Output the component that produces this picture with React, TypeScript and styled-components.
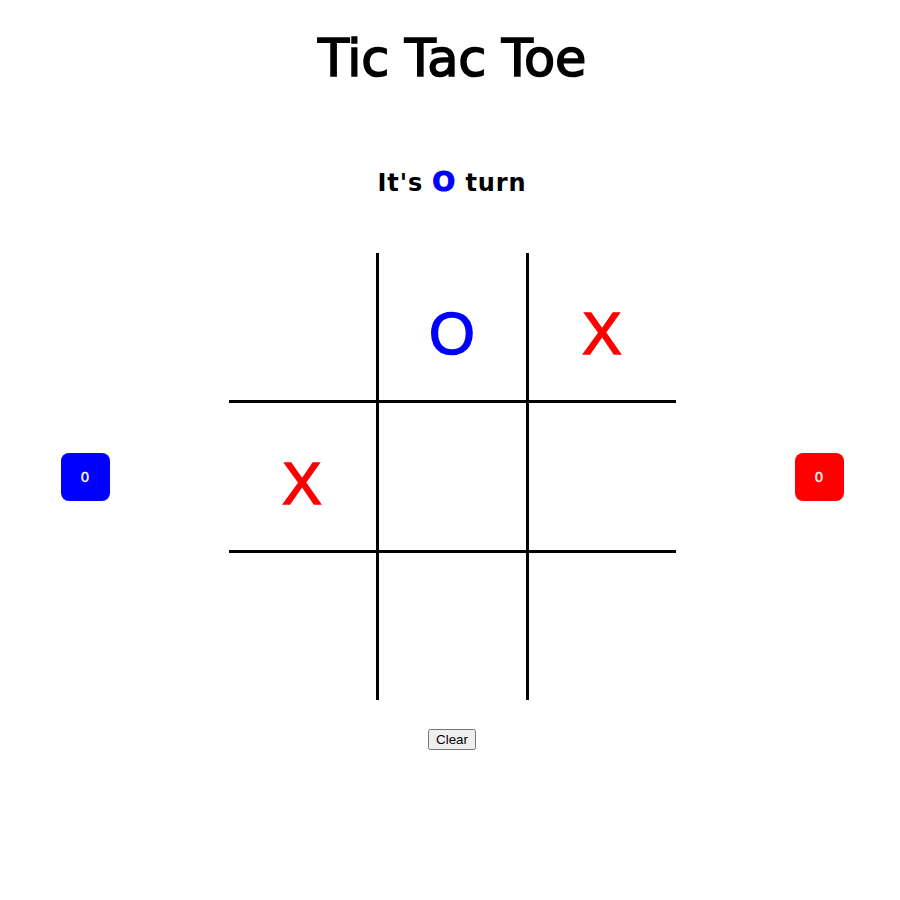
import React from "react";
import styled, { createGlobalStyle } from "styled-components";

const GlobalStyle = createGlobalStyle`
  html, body {
    margin: 0;
    padding: 0;
    background: #ffffff;
  }
  body {
    font-family: "DejaVu Sans", "Liberation Sans", sans-serif;
    color: #000000;
  }
`;

const Page = styled.div`
  display: flex;
  flex-direction: column;
  align-items: center;
  padding: 0 8px 0 12px;
`;

const Title = styled.h1`
  margin: 0;
  padding-top: 33px;
  font-family: "DejaVu Sans", "Liberation Sans", sans-serif;
  font-weight: 400;
  font-size: 51px;
  line-height: 52px;
  letter-spacing: -0.3px;
  -webkit-text-stroke: 1.6px #000;
`;

const Turn = styled.h2`
  margin: 83px 0 0;
  font-family: "DejaVu Sans", "Liberation Sans", sans-serif;
  font-weight: 700;
  font-size: 24px;
  line-height: 24px;
  height: 24px;
  letter-spacing: 0.9px;
`;

const TurnMark = styled.span<{ $color: string }>`
  color: ${(p) => p.$color};
  font-size: 27px;
  line-height: 1;
  -webkit-text-stroke: 1px ${(p) => p.$color};
`;

const GameRow = styled.div`
  display: flex;
  align-items: center;
  gap: 119px;
  margin-top: 61px;
`;

const ScoreBox = styled.div<{ $color: string }>`
  width: 49px;
  height: 48px;
  border-radius: 8px;
  background: ${(p) => p.$color};
  color: #ffffff;
  display: flex;
  align-items: center;
  justify-content: center;
  font-family: "DejaVu Sans", "Liberation Sans", sans-serif;
  font-size: 14px;
  -webkit-text-stroke: 0.3px #fff;
`;

const Board = styled.div`
  display: grid;
  grid-template-columns: repeat(3, auto);
`;

const Cell = styled.div<{ $right: boolean; $bottom: boolean; $color: string }>`
  width: 147px;
  height: 147px;
  box-sizing: content-box;
  padding: 0;
  border-right: ${(p) => (p.$right ? "3px solid #000" : "none")};
  border-bottom: ${(p) => (p.$bottom ? "3px solid #000" : "none")};
  display: flex;
  align-items: center;
  justify-content: center;
  font-family: "Liberation Sans", Arial, sans-serif;
  font-size: 59px;
  color: ${(p) => p.$color};
  -webkit-text-stroke: 1.6px ${(p) => p.$color};
`;

const MarkText = styled.span`
  position: relative;
  top: 7px;
`;

const ClearButton = styled.button`
  margin-top: 29px;
  font-family: "Liberation Sans", Arial, sans-serif;
  font-size: 13.333px;
`;

const board: string[] = ["", "O", "X", "X", "", "", "", "", ""];

const markColor = (m: string) => (m === "O" ? "#0000ff" : "#ff0000");

export default function App() {
  return (
    <>
      <GlobalStyle />
      <Page>
        <Title>Tic Tac Toe</Title>
        <Turn>
          It's <TurnMark $color="#0000ff">O</TurnMark> turn
        </Turn>
        <GameRow>
          <ScoreBox $color="#0000ff">0</ScoreBox>
          <Board>
            {board.map((m, i) => (
              <Cell
                key={i}
                $right={i % 3 !== 2}
                $bottom={i < 6}
                $color={markColor(m)}
              >
                {m && <MarkText>{m}</MarkText>}
              </Cell>
            ))}
          </Board>
          <ScoreBox $color="#ff0000">0</ScoreBox>
        </GameRow>
        <ClearButton>Clear</ClearButton>
      </Page>
    </>
  );
}
